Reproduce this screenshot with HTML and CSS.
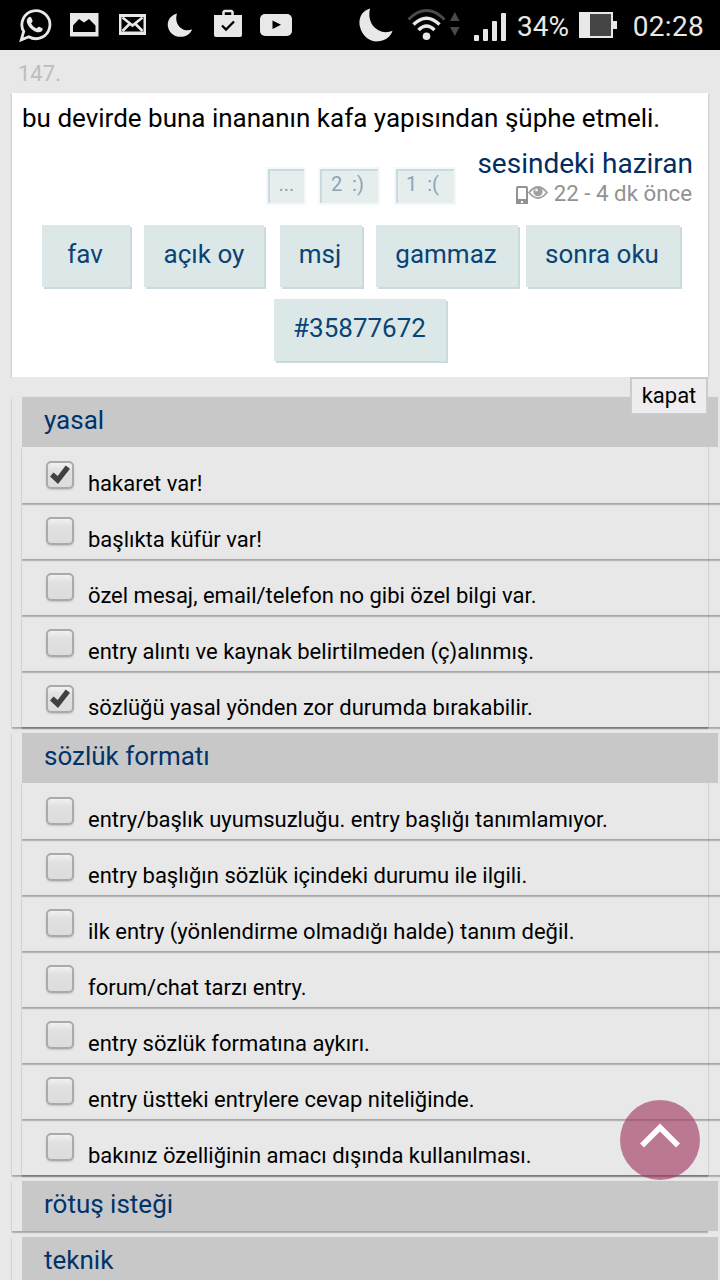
FILE: index.html
```html
<!DOCTYPE html>
<html lang="tr">
<head>
<meta charset="utf-8">
<title>sözlük</title>
<link rel="stylesheet" href="styles.css">
</head>
<body>
<div class="page">
<header class="status">
  <div class="status-left">
    <svg width="34" height="50" viewBox="19 0 34 50"><path d="M22.300 39.800l2.400-8.300A14 14 0 1 1 29.800 36.700z" fill="none" stroke="#e8e8e8" stroke-width="2.800"/><path d="M29.500 17.500c1-.9 2.200-1 2.700 0l1.400 3.200c.3.900-.9 1.900-1.500 2.600 1.300 2.500 3 4.100 5.500 5.200.8-.7 1.500-2.200 2.500-1.800l3.200 1.600c.8.500.3 2.100-.6 2.900-1.700 1.500-3.800 1.500-6.700.2-4-1.800-7-5-8-8.600-.6-2.200 0-4 1.500-5.300z" fill="#e8e8e8"/></svg>
    <svg width="30" height="50" viewBox="69 0 30 50"><path d="M70 13h28.500v23.500H70z" fill="#e8e8e8"/><path d="M73 32v-6.500l6-6.500 5 3.500 5-3.500 6.500 6.500V32z" fill="#000"/></svg>
    <svg width="28" height="50" viewBox="119 0 28 50"><path d="M119 14h27v21h-27z" fill="#e8e8e8"/><path d="M121.500 17h22v14.500h-22z" fill="#000"/><path d="M122.500 17.500l10 8 10-8M122.500 31l7-7M142.500 31l-7-7" fill="none" stroke="#e8e8e8" stroke-width="2.600"/><path d="M125 17h15l-7.500 5.500z" fill="#000"/></svg>
    <svg width="26" height="50" viewBox="167 0 26 50"><path d="M177 13.500C169 16 167 22 168 27c1.500 7 8 10.500 14 9.700 5-.6 9-3.500 10-7.500-3 1.500-7 1.500-10-.5-5-3-7-9-5-15.200z" fill="#e8e8e8"/></svg>
    <svg width="28" height="50" viewBox="214 0 28 50"><path d="M214 15h28v20q0 2-2 2h-24q-2 0-2-2z" fill="#e8e8e8"/><path d="M223.500 15v-3l1-1h7l1 1v3" fill="none" stroke="#e8e8e8" stroke-width="2.500"/><path d="M222 25.500l4 4 8-8" fill="none" stroke="#000" stroke-width="2.300"/></svg>
    <svg width="32" height="50" viewBox="260 0 32 50"><rect x="260" y="14" width="32" height="22" rx="5" fill="#e8e8e8"/><path d="M272.500 20.500l8.500 4.200-8.500 4.300z" fill="#000"/></svg>
  </div>
  <div class="status-right">
    <svg width="34" height="50" viewBox="359 0 34 50"><path d="M370 8.500C361 11 358 20 360 27c2.500 10 11 15.500 19 14.300 7-.9 12-5 13.500-10.500-4 2-10 2-14-.5-8-4.500-10.500-12.500-8.500-21.800z" fill="#e8e8e8"/></svg>
    <svg class="wifi" width="54" height="50" viewBox="407 0 54 50"><g fill="none" stroke-width="3"><path d="M408.500 19.500Q426.500 1.500 444.500 19.500" stroke="#4a4a4a"/><path d="M413.500 24.500Q426.500 12 439.500 24.500M418.500 30Q426.500 22 434.500 30" stroke="#e8e8e8" stroke-width="3.400"/></g><circle cx="426.500" cy="36.300" r="3.800" fill="#e8e8e8"/><path d="M450 21l4.800-9 4.800 9zM450 27h9.600l-4.800 9z" fill="#4a4a4a"/></svg>
    <svg class="signal" width="33" height="50" viewBox="474 0 33 50"><g fill="#e8e8e8"><rect x="474" y="35" width="5" height="6" rx="1"/><rect x="483" y="29" width="5" height="12" rx="1"/><rect x="492" y="21" width="5" height="20" rx="1"/><rect x="501" y="13" width="5" height="28" rx="1"/></g></svg>
    <span class="percent">34%</span>
    <svg class="battery" width="38" height="50" viewBox="579 0 38 50"><path d="M579 12h34v9h4v8h-4v9h-34z" fill="#e8e8e8"/><path d="M590 14h21v22h-21z" fill="#454545"/></svg>
    <span class="clock">02:28</span>
  </div>
</header>
<main class="content">
  <div class="entry-no">147.</div>
  <article class="entry">
    <p class="entry-text">bu devirde buna inananın kafa yapısından şüphe etmeli.</p>
    <div class="meta">
      <div class="votes"><span class="vote dots">...</span><span class="vote">2&nbsp; :)</span><span class="vote last">1&nbsp; :(</span></div>
      <div class="byline">
        <a class="author">sesindeki haziran</a>
        <div class="when">
          <svg width="33" height="24" viewBox="515 182 33 24"><rect x="517" y="187" width="10" height="16" rx="1" fill="#fff" stroke="#929292" stroke-width="2"/><path d="M516 199h12v5h-12z" fill="#929292"/><path d="M521 201h2v2h-2z" fill="#fff"/><path d="M529 192.500q9-11 18 0-9 11-18 0z" fill="#fff" stroke="#a0a0a0" stroke-width="1.800"/><circle cx="538" cy="191.700" r="4.600" fill="#a0a0a0"/><circle cx="536.500" cy="190" r="1.500" fill="#eee"/></svg>
          <span>22 - 4 dk önce</span>
        </div>
      </div>
    </div>
    <div class="actions">
      <a class="btn fav">fav</a><a class="btn vote-open">açık oy</a><a class="btn msj">msj</a><a class="btn gammaz">gammaz</a><a class="btn later">sonra oku</a>
    </div>
    <div class="actions second"><a class="btn permalink">#35877672</a></div>
  </article>
  <section class="report">
    <button class="close">kapat</button>
    <div class="group">
      <h2>yasal</h2>
      <label class="row"><span class="box"><svg width="24" height="24" viewBox="0 0 24 24"><path d="M2 13.500l3.500-4 4.200 3.500 8-10.500 4.300 3.300L10 21z"/></svg></span><span>hakaret var!</span></label>
      <label class="row"><span class="box"></span><span>başlıkta küfür var!</span></label>
      <label class="row"><span class="box"></span><span>özel mesaj, email/telefon no gibi özel bilgi var.</span></label>
      <label class="row"><span class="box"></span><span>entry alıntı ve kaynak belirtilmeden (ç)alınmış.</span></label>
      <label class="row"><span class="box"><svg width="24" height="24" viewBox="0 0 24 24"><path d="M2 13.500l3.500-4 4.200 3.500 8-10.500 4.300 3.300L10 21z"/></svg></span><span>sözlüğü yasal yönden zor durumda bırakabilir.</span></label>
    </div>
    <div class="group">
      <h2>sözlük formatı</h2>
      <label class="row"><span class="box"></span><span>entry/başlık uyumsuzluğu. entry başlığı tanımlamıyor.</span></label>
      <label class="row"><span class="box"></span><span>entry başlığın sözlük içindeki durumu ile ilgili.</span></label>
      <label class="row"><span class="box"></span><span>ilk entry (yönlendirme olmadığı halde) tanım değil.</span></label>
      <label class="row"><span class="box"></span><span>forum/chat tarzı entry.</span></label>
      <label class="row"><span class="box"></span><span>entry sözlük formatına aykırı.</span></label>
      <label class="row"><span class="box"></span><span>entry üstteki entrylere cevap niteliğinde.</span></label>
      <label class="row"><span class="box"></span><span>bakınız özelliğinin amacı dışında kullanılması.</span></label>
    </div>
    <div class="group"><h2>rötuş isteği</h2></div>
    <div class="group"><h2>teknik</h2></div>
  </section>
</main>
<a class="to-top"><svg width="80" height="80" viewBox="0 0 80 80"><path d="M22 45.500l18-18 18 18" fill="none" stroke="#fff" stroke-width="5.500"/></svg></a>
</div>
</body>
</html>
```
FILE: styles.css
```css
* { box-sizing: border-box; }
body { margin: 0; font-family: Roboto, "Noto Sans", sans-serif; color: #000; }
svg { display: block; flex: none; }
.page { position: relative; width: 720px; height: 1280px; overflow: hidden; background: #e8e8e8; }
.status { display: flex; justify-content: space-between; height: 50px; padding: 0 16px 0 18px; background: #000; color: #e8e8e8; }
.status-left { display: flex; }
.status-left svg + svg { margin-left: 17px; }
.status-left svg:nth-child(3) { margin-left: 20px; }
.status-left svg:nth-child(4) { margin-left: 20px; }
.status-left svg:nth-child(5) { margin-left: 21px; }
.status-left svg:nth-child(6) { margin-left: 18px; }
.status-right { display: flex; width: 345px; line-height: 54px; font-size: 28px; white-space: nowrap; }
.wifi { margin-left: 14px; }
.signal { margin-left: 13px; }
.percent { width: 62px; margin-left: 10px; }
.battery { margin-left: 0; }
.clock { margin-left: 16px; letter-spacing: .3px; }
.content { padding-left: 12px; }
.entry-no { height: 43px; padding-left: 6px; line-height: 47px; font-size: 22px; color: #bdbdbd; }
.entry { width: 696px; height: 284px; background: #fff; box-shadow: 0 1px 2px rgba(0,0,0,.3); white-space: nowrap; }
.entry-text { margin: 0; height: 51px; padding-left: 10px; line-height: 50px; font-size: 26px; }
.meta { display: flex; justify-content: flex-end; height: 81px; padding-right: 15px; }
.votes { display: flex; padding-top: 23px; margin-right: 21px; }
.vote { width: 62px; height: 38px; margin-right: 14px; padding-right: 4px; border: 2px solid #f3f8f8; background: #e5eeed; box-shadow: inset 2px 2px #cbdae1; font-size: 20px; line-height: 31px; text-align: center; color: #8aa5ba; }
.vote.dots { width: 40px; margin-right: 12px; padding-right: 0; }
.vote.last { margin-right: 0; padding-right: 6px; }
.byline { text-align: right; }
.author { display: block; height: 38px; line-height: 40px; font-size: 28px; color: #002d62; }
.when { display: flex; justify-content: flex-end; padding-right: 1px; line-height: 22px; font-size: 22.3px; color: #929292; }
.when svg { margin-right: 6px; }
.actions { display: flex; margin-left: 30px; height: 74px; }
.second { margin-left: 262px; }
.btn { height: 62px; padding-right: 2px; background: #dbe8e7; box-shadow: 2px 2px #cbd9e1; text-align: center; font-size: 26px; line-height: 59px; color: #0a4375; }
.fav { width: 88px; margin-right: 14px; }
.vote-open { width: 120px; margin-right: 16px; padding-right: 0; }
.msj { width: 82px; margin-right: 14px; }
.gammaz { width: 142px; margin-right: 8px; }
.later { width: 154px; }
.permalink { width: 172px; padding-right: 1px; }
.report { position: relative; width: 696px; padding-top: 20px; background: #e8e8e8; }
.close { position: absolute; z-index: 1; right: 0; top: 0; width: 78px; height: 38px; padding: 0 0 2px; border: 2px solid #c9cccc; background: #eeecee; font: 22px Roboto, sans-serif; color: #000; }
.group { margin-bottom: 6px; padding-left: 10px; box-shadow: 0 1px 2px rgba(0,0,0,.2), 0 2px 1px rgba(0,0,0,.16); }
.group h2 { position: relative; width: 696px; height: 50px; margin: 0; padding-left: 22px; background: #c8c8c8; font-size: 26px; font-weight: 400; line-height: 46px; color: #00336a; }
.row { display: flex; width: 704px; height: 56px; padding: 14px 0 0 24px; box-shadow: 0 1px 2px rgba(0,0,0,.2), 0 2px 1px rgba(0,0,0,.16); font-size: 22px; line-height: 45px; white-space: nowrap; }
.box { flex: none; width: 28px; height: 28px; margin-right: 14px; border: 2px solid #aaa; border-radius: 5px; background: linear-gradient(#f0f0f0, #e0e0e0 35%, #dcdcdc); box-shadow: 0 1px 2px rgba(0,0,0,.15); }
.box svg { fill: #404040; }
.to-top { position: absolute; left: 620px; top: 1100px; width: 80px; height: 80px; border-radius: 50%; background: rgba(164,62,101,.66); }
```
